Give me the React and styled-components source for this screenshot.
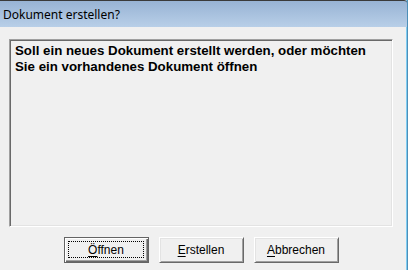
import React from "react";
import styled, { createGlobalStyle } from "styled-components";

const GlobalStyle = createGlobalStyle`
  html, body { margin: 0; padding: 0; background: #f0f0f0; }
  body { font-family: "Liberation Sans", Arial, sans-serif; }
`;

const Window = styled.div`
  width: 408px;
  height: 270px;
  box-sizing: border-box;
  display: flex;
  flex-direction: column;
  background: #f0f0f0;
  border-right: 1px solid #4d8fb8;
  box-shadow: inset -1px 0 0 #7fcdf2;
`;

const TitleBar = styled.div`
  height: 27px;
  box-sizing: border-box;
  border-top: 1px solid #3a3a3a;
  border-top-right-radius: 3px;
  background: linear-gradient(#98b3d4, #b8cfe8);
  display: flex;
  align-items: center;
  padding-left: 3px;
  font-family: "Noto Sans", "Liberation Sans", sans-serif;
  font-size: 12px;
  color: #000;
`;

const Body = styled.div`
  flex: 1;
  padding: 12px 14px 0 9px;
  display: flex;
  flex-direction: column;
`;

const Panel = styled.div`
  height: 188px;
  box-sizing: border-box;
  border-style: solid;
  border-width: 1px;
  border-color: #a0a0a0 #ffffff #ffffff #a0a0a0;
  box-shadow: inset 1px 1px 0 #696969, inset -1px -1px 0 #e3e3e3;
  padding: 3px 6px 0 5px;
`;

const Message = styled.p`
  margin: 0;
  font-family: "Liberation Sans", Arial, sans-serif;
  font-weight: bold;
  font-size: 13.3px;
  line-height: 16px;
  color: #000;
`;

const ButtonRow = styled.div`
  margin-top: 10px;
  display: flex;
  justify-content: center;
  gap: 10px;
`;

const Button = styled.button`
  width: 85px;
  height: 26px;
  box-sizing: border-box;
  margin: 0;
  padding: 0;
  background: #f0f0f0;
  font-family: "Liberation Sans", Arial, sans-serif;
  font-size: 12px;
  color: #000;
  position: relative;
  border-style: solid;
  border-width: 1px;
  border-color: ${(p) =>
    p.$default ? "#646464" : "#ffffff #696969 #696969 #ffffff"};
  box-shadow: ${(p) =>
    p.$default
      ? "inset 1px 1px 0 #ffffff, inset -1px -1px 0 #696969, inset -2px -2px 0 #a0a0a0"
      : "inset 1px 1px 0 #e3e3e3, inset -1px -1px 0 #a0a0a0"};
  display: flex;
  align-items: center;
  justify-content: center;
`;

const Focus = styled.span`
  position: absolute;
  inset: 3px 4px 4px 3px;
  border: 1px dotted #000;
  pointer-events: none;
`;

const Key = styled.span`
  text-decoration: underline;
  text-underline-offset: 2px;
`;

export default function App() {
  return (
    <>
      <GlobalStyle />
      <Window>
        <TitleBar>Dokument erstellen?</TitleBar>
        <Body>
          <Panel>
            <Message>
              Soll ein neues Dokument erstellt werden, oder möchten
              <br />
              Sie ein vorhandenes Dokument öffnen
            </Message>
          </Panel>
          <ButtonRow>
            <Button $default>
              <Focus />
              <span>
                <Key>Ö</Key>ffnen
              </span>
            </Button>
            <Button>
              <span>
                <Key>E</Key>rstellen
              </span>
            </Button>
            <Button>
              <span>
                <Key>A</Key>bbrechen
              </span>
            </Button>
          </ButtonRow>
        </Body>
      </Window>
    </>
  );
}
